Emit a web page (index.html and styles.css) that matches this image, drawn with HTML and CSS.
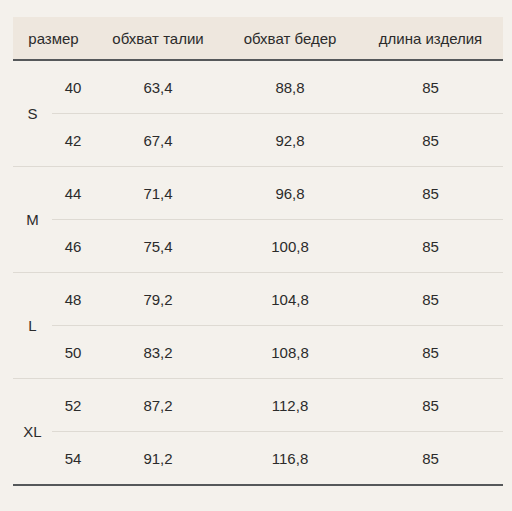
FILE: index.html
```html
<!DOCTYPE html>
<html lang="ru">
<head>
<meta charset="utf-8">
<link rel="stylesheet" href="styles.css">
</head>
<body>
<table class="sizes">
  <colgroup>
    <col class="c1"><col class="c2"><col class="c3"><col class="c4"><col class="c5">
  </colgroup>
  <thead>
    <tr><th colspan="2">размер</th><th>обхват талии</th><th>обхват бедер</th><th>длина изделия</th></tr>
  </thead>
  <tbody>
    <tr class="first"><td class="size" rowspan="2">S</td><td>40</td><td>63,4</td><td>88,8</td><td>85</td></tr>
    <tr class="second"><td>42</td><td>67,4</td><td>92,8</td><td>85</td></tr>
    <tr class="first"><td class="size" rowspan="2">M</td><td>44</td><td>71,4</td><td>96,8</td><td>85</td></tr>
    <tr class="second"><td>46</td><td>75,4</td><td>100,8</td><td>85</td></tr>
    <tr class="first"><td class="size" rowspan="2">L</td><td>48</td><td>79,2</td><td>104,8</td><td>85</td></tr>
    <tr class="second"><td>50</td><td>83,2</td><td>108,8</td><td>85</td></tr>
    <tr class="first"><td class="size" rowspan="2">XL</td><td>52</td><td>87,2</td><td>112,8</td><td>85</td></tr>
    <tr class="second last"><td>54</td><td>91,2</td><td>116,8</td><td>85</td></tr>
  </tbody>
</table>
</body>
</html>
```
FILE: styles.css
```css
html, body {
  margin: 0;
  background: #f4f1ec;
}
body {
  padding: 17px 9px 0 13px;
  font-family: "Liberation Sans", Arial, sans-serif;
  font-size: 15px;
  color: #2b2b2b;
}
.sizes {
  width: 490px;
  border-collapse: collapse;
  table-layout: fixed;
}
.c1 { width: 39px; }
.c2 { width: 42px; }
.c3 { width: 128px; }
.c4 { width: 136px; }
.c5 { width: 145px; }
.sizes th {
  background: #eee7de;
  font-weight: normal;
  height: 42px;
  padding: 0;
  text-align: center;
  border-bottom: 2px solid #55585a;
  vertical-align: middle;
}
.sizes td {
  height: 52px;
  padding: 0;
  text-align: center;
  vertical-align: middle;
}
.sizes tr.first td,
.sizes tr.second td,
.sizes td.size {
  border-bottom: 1px solid #dedad3;
}
.sizes tr.last td,
.sizes tr:nth-last-child(2) td.size {
  border-bottom: 2px solid #55585a;
}
```
